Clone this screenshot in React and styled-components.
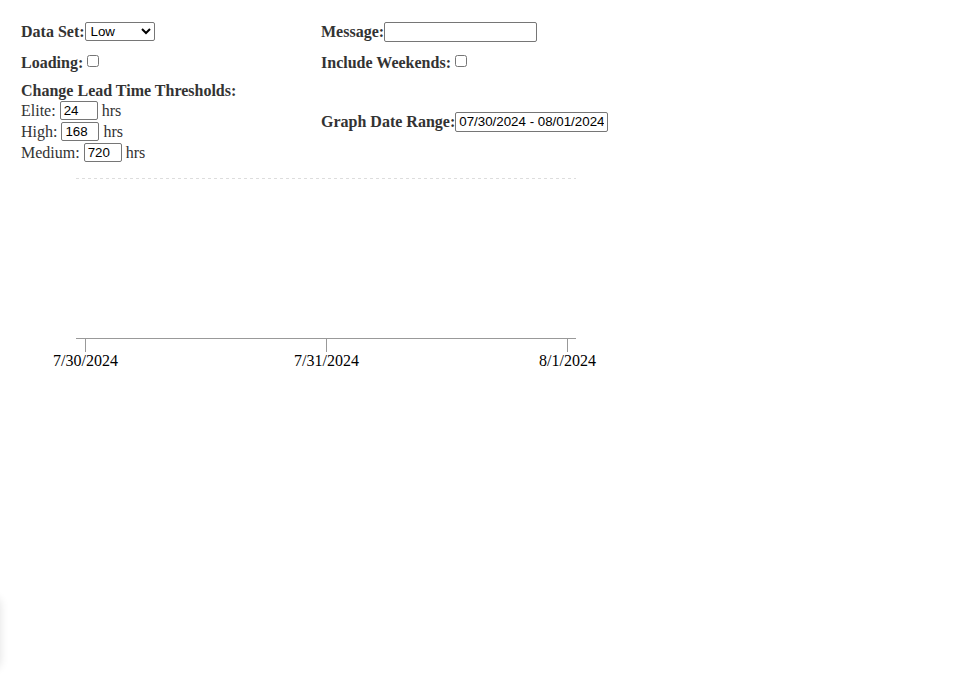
import React from "react";
import styled, { createGlobalStyle } from "styled-components";

const Global = createGlobalStyle`
  body {
    margin: 8px;
    background: #fff;
    font-family: "Liberation Serif", "Times New Roman", serif;
    font-size: 16px;
    color: #333;
  }
`;

const Page = styled.div`
  padding: 14px 13px 0;
`;

const Controls = styled.div`
  display: grid;
  grid-template-columns: 300px 300px;
  grid-template-rows: 19px 19px auto;
  row-gap: 12px;
  align-items: center;
`;

const Field = styled.div`
  display: flex;
  align-items: center;
`;

const Label = styled.span`
  font-weight: bold;
  line-height: 19px;
`;

const Select = styled.select`
  width: 70px;
  height: 19px;
  font-family: "Liberation Sans", Arial, sans-serif;
  font-size: 13.33px;
  padding: 0 0 0 1px;
  border: 1px solid #767676;
  border-radius: 2px;
  background: #fff;
  color: #000;
`;

const TextInput = styled.input`
  box-sizing: border-box;
  width: ${(p) => p.$width || 153}px;
  height: ${(p) => p.$height || 20}px;
  font-family: "Liberation Sans", Arial, sans-serif;
  font-size: 13.33px;
  padding: 1px 3px;
  border: 1px solid #767676;
  border-radius: 2px;
  color: #000;
  margin: 0;
`;

const Check = styled.input.attrs({ type: "checkbox" })`
  width: 12px;
  height: 12px;
  margin: 0 0 0 4px;
  position: relative;
  top: -2px;
`;

const Thresholds = styled.div`
  display: flex;
  flex-direction: column;
  margin-top: -3px;
`;

const ThresholdRow = styled.div`
  display: flex;
  align-items: center;
  height: 21px;
  gap: 4px;
`;

const DateField = styled(Field)`
  margin-top: -4px;
`;

const Chart = styled.svg`
  display: block;
  margin-top: 7px;
  font-family: "Liberation Serif", "Times New Roman", serif;
`;

const Drawer = styled.div`
  position: fixed;
  left: -40px;
  top: 598px;
  width: 40px;
  height: 70px;
  border-radius: 6px;
  background: #fff;
  box-shadow: 0 0 10px rgba(0, 0, 0, 0.12);
`;

const ticks = [
  { x: 64, label: "7/30/2024" },
  { x: 305, label: "7/31/2024" },
  { x: 546, label: "8/1/2024" },
];

export default function App() {
  return (
    <Page>
      <Global />
      <Controls>
        <Field>
          <Label>Data Set:</Label>
          <Select defaultValue="Low">
            <option>Low</option>
            <option>Medium</option>
            <option>High</option>
          </Select>
        </Field>
        <Field>
          <Label>Message:</Label>
          <TextInput type="text" />
        </Field>
        <Field>
          <Label>Loading:</Label>
          <Check />
        </Field>
        <Field>
          <Label>Include Weekends:</Label>
          <Check />
        </Field>
        <Thresholds>
          <Label>Change Lead Time Thresholds:</Label>
          <ThresholdRow>
            Elite: <TextInput $width={38} $height={19} defaultValue="24" /> hrs
          </ThresholdRow>
          <ThresholdRow>
            High: <TextInput $width={38} $height={19} defaultValue="168" /> hrs
          </ThresholdRow>
          <ThresholdRow>
            Medium: <TextInput $width={38} $height={19} defaultValue="720" /> hrs
          </ThresholdRow>
        </Thresholds>
        <DateField>
          <Label>Graph Date Range:</Label>
          <TextInput type="text" defaultValue="07/30/2024 - 08/01/2024" />
        </DateField>
      </Controls>
      <Chart width="600" height="200">
        <line x1="55" x2="555" y1="8.5" y2="8.5" stroke="#ddd" strokeDasharray="3 3" />
        <line x1="55" x2="555" y1="168.5" y2="168.5" stroke="#999" />
        {ticks.map((t) => (
          <g key={t.label}>
            <line x1={t.x + 0.5} x2={t.x + 0.5} y1="168" y2="182" stroke="#999" />
            <text x={t.x + 0.5} y="196" textAnchor="middle" fontSize="16" fill="#000">
              {t.label}
            </text>
          </g>
        ))}
      </Chart>
      <Drawer />
    </Page>
  );
}
